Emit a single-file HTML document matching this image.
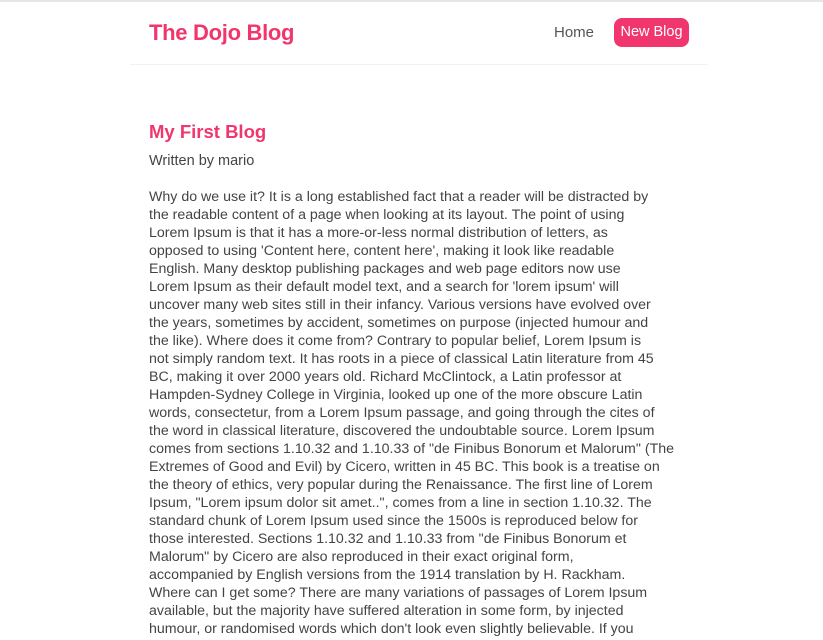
<!DOCTYPE html>
<html><head><meta charset="utf-8"><style>
html,body{margin:0;padding:0;background:#fff;}
body{border-top:2px solid #e6e6e6;font-family:"Liberation Sans",sans-serif;color:#333;width:823px;height:638px;overflow:hidden;position:relative}
.nav{position:absolute;left:130px;top:0;width:578px;height:62px;border-bottom:1px solid #f2f2f2}
.logo{position:absolute;left:19px;top:18px;font-size:22px;font-weight:bold;color:#f1356d;letter-spacing:-0.3px}
.home{position:absolute;left:424px;top:22px;font-size:15px;color:#555}
.nb{position:absolute;left:484px;top:16px;width:75px;height:29px;background:#f1356d;border-radius:8px;color:#fff;font-size:14.5px;line-height:29px;text-align:center}
h2{position:absolute;left:149px;top:119px;margin:0;font-size:18.5px;color:#f1356d;font-weight:bold}
.by{position:absolute;left:149px;top:151px;font-size:14.5px;color:#444}
.body{position:absolute;left:149px;top:186px;font-size:14.2px;line-height:18px;color:#444;white-space:nowrap}
</style></head><body>
<div class="nav"><div class="logo">The Dojo Blog</div><div class="home">Home</div><div class="nb">New Blog</div></div>
<h2>My First Blog</h2>
<div class="by">Written by mario</div>
<div class="body">
Why do we use it? It is a long established fact that a reader will be distracted by<br>
the readable content of a page when looking at its layout. The point of using<br>
Lorem Ipsum is that it has a more-or-less normal distribution of letters, as<br>
opposed to using 'Content here, content here', making it look like readable<br>
English. Many desktop publishing packages and web page editors now use<br>
Lorem Ipsum as their default model text, and a search for 'lorem ipsum' will<br>
uncover many web sites still in their infancy. Various versions have evolved over<br>
the years, sometimes by accident, sometimes on purpose (injected humour and<br>
the like). Where does it come from? Contrary to popular belief, Lorem Ipsum is<br>
not simply random text. It has roots in a piece of classical Latin literature from 45<br>
BC, making it over 2000 years old. Richard McClintock, a Latin professor at<br>
Hampden-Sydney College in Virginia, looked up one of the more obscure Latin<br>
words, consectetur, from a Lorem Ipsum passage, and going through the cites of<br>
the word in classical literature, discovered the undoubtable source. Lorem Ipsum<br>
comes from sections 1.10.32 and 1.10.33 of "de Finibus Bonorum et Malorum" (The<br>
Extremes of Good and Evil) by Cicero, written in 45 BC. This book is a treatise on<br>
the theory of ethics, very popular during the Renaissance. The first line of Lorem<br>
Ipsum, "Lorem ipsum dolor sit amet..", comes from a line in section 1.10.32. The<br>
standard chunk of Lorem Ipsum used since the 1500s is reproduced below for<br>
those interested. Sections 1.10.32 and 1.10.33 from "de Finibus Bonorum et<br>
Malorum" by Cicero are also reproduced in their exact original form,<br>
accompanied by English versions from the 1914 translation by H. Rackham.<br>
Where can I get some? There are many variations of passages of Lorem Ipsum<br>
available, but the majority have suffered alteration in some form, by injected<br>
humour, or randomised words which don't look even slightly believable. If you
</div>
</body></html>
